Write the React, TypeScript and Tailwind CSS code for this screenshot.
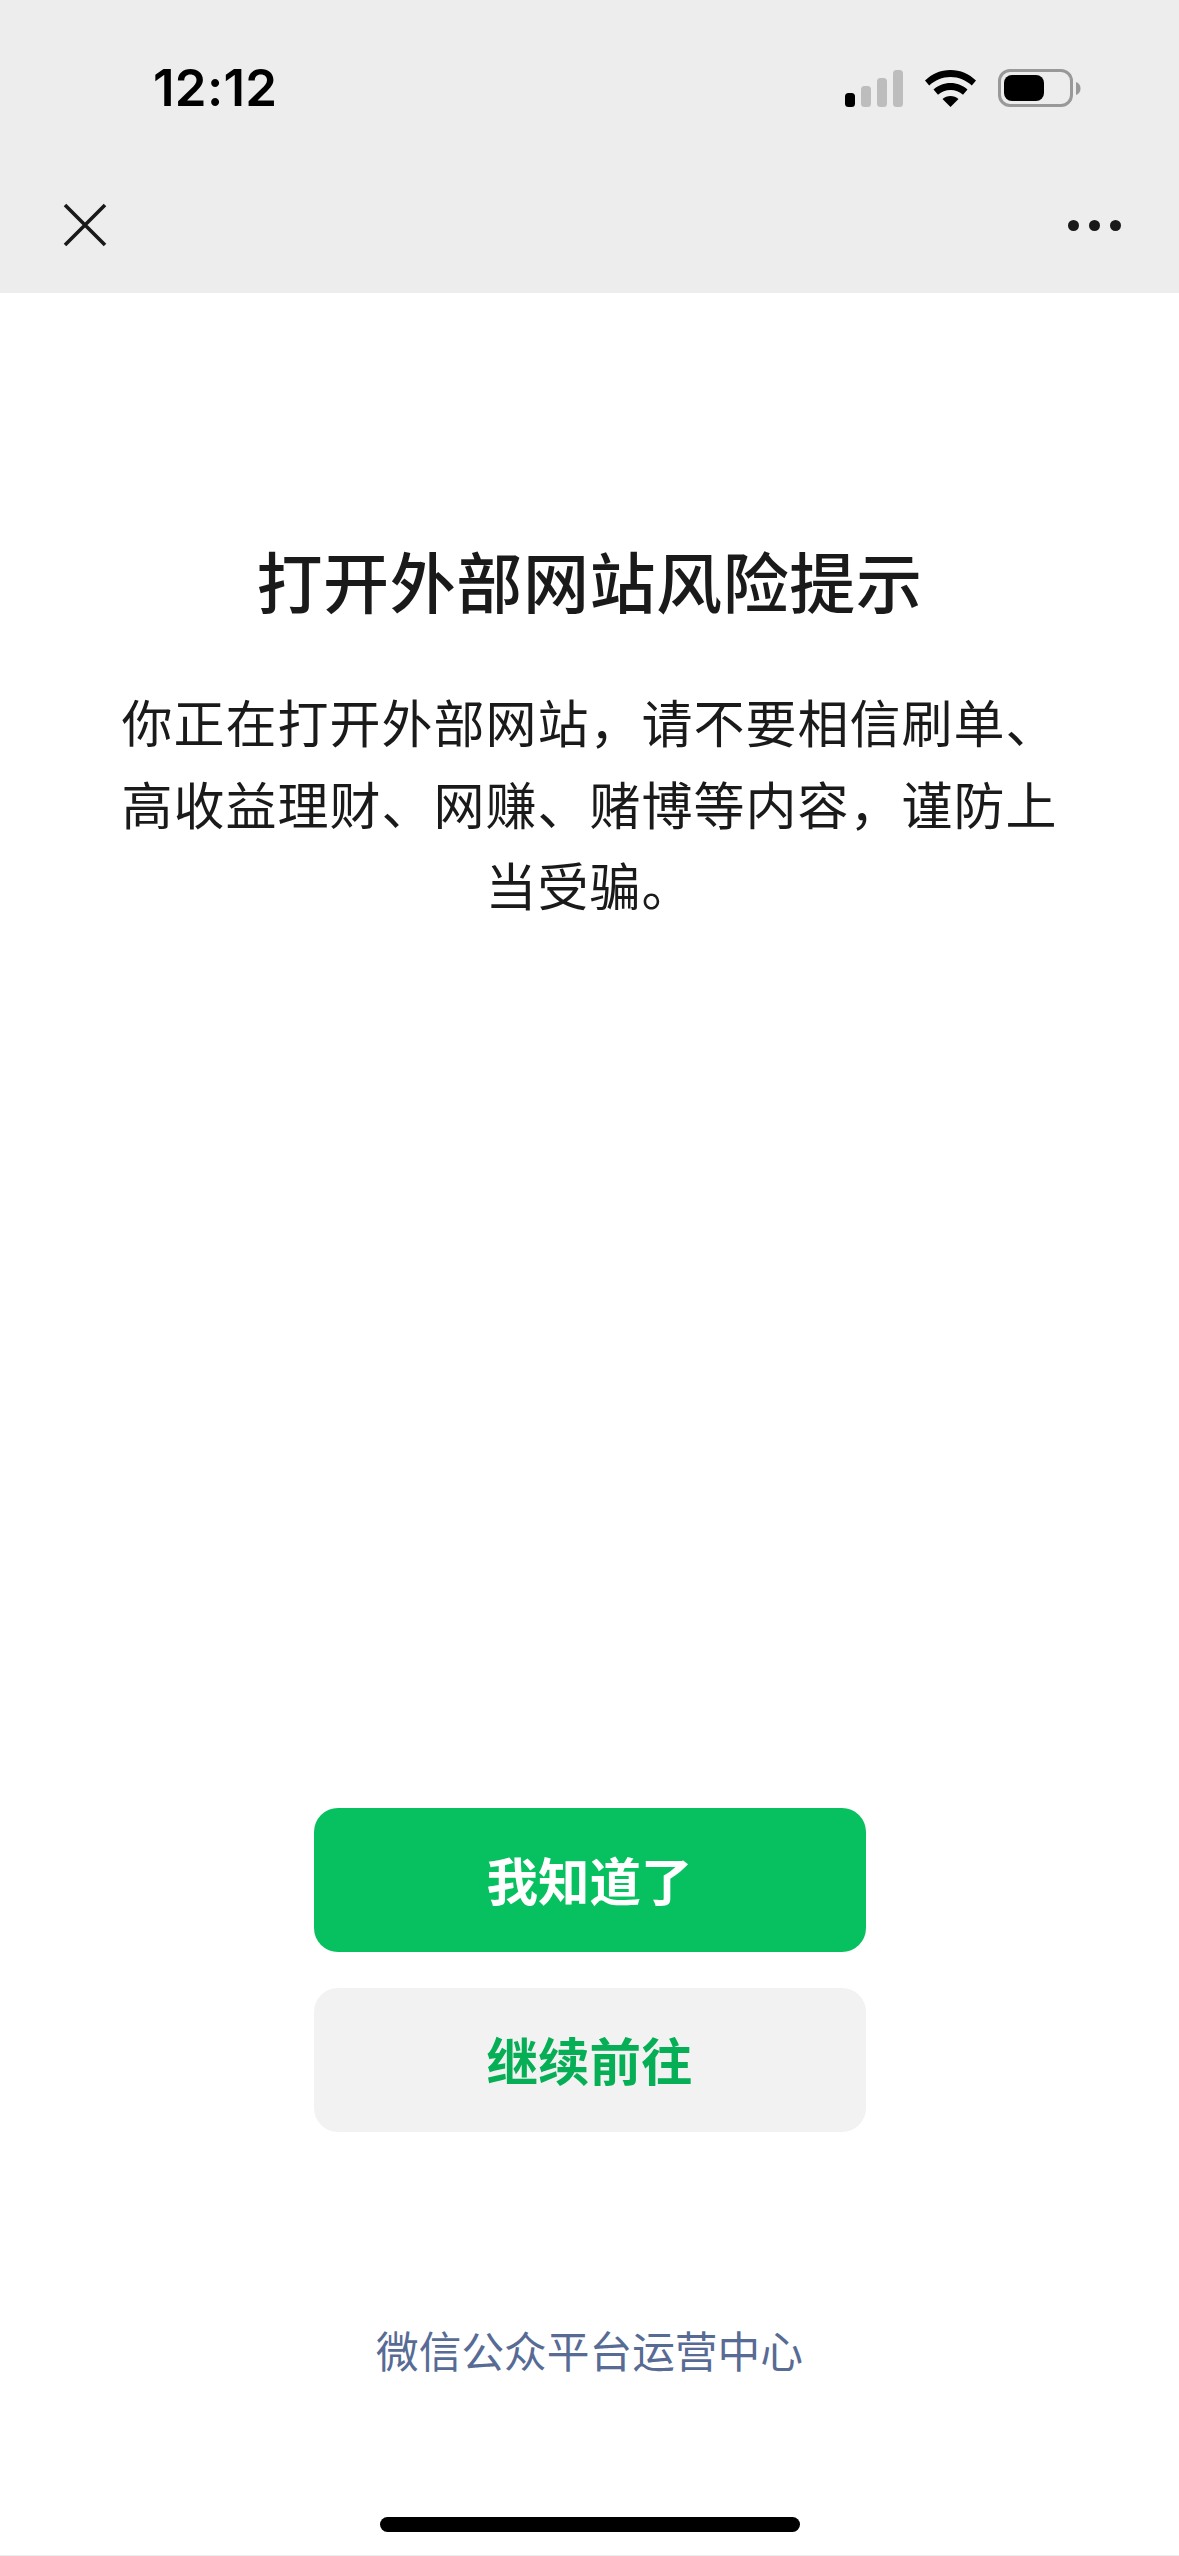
const cjk = "font-['PingFang_SC','Noto_Sans_CJK_SC',sans-serif]";

const SignalIcon = () => (
  <svg width="58" height="37" viewBox="0 0 58 37" className="block">
    <rect x="0" y="23" width="10" height="14" rx="3.5" fill="#000" />
    <rect x="16" y="16" width="10" height="21" rx="3.5" fill="#bdbdbd" />
    <rect x="32" y="8" width="10" height="29" rx="3.5" fill="#bdbdbd" />
    <rect x="48" y="0" width="10" height="37" rx="3.5" fill="#bdbdbd" />
  </svg>
);

const WifiIcon = () => (
  <svg width="51" height="37" viewBox="0 0 51 37" className="block">
    <path d="M0 10.5C7 4 15.5 0 25.5 0S44 4 51 10.5L46.8 15.5C40.8 10.2 33.8 7 25.5 7S10.2 10.2 4.2 15.5Z" fill="#000" />
    <path d="M8.5 19.5C13 15.6 19 13 25.5 13S38 15.6 42.5 19.5L38 24.8C34.5 21.9 30.2 20 25.5 20S16.5 21.9 13 24.8Z" fill="#000" />
    <path d="M17.5 29C19.7 27.2 22.5 26 25.5 26S31.3 27.2 33.5 29L25.5 37Z" fill="#000" />
  </svg>
);

const BatteryIcon = () => (
  <div className="flex items-center">
    <div className="w-[75px] h-[38px] rounded-[12px] border-[3px] border-[#999999] p-[3px] box-border">
      <div className="w-[40px] h-full rounded-[8px] bg-black" />
    </div>
    <svg width="5" height="13" viewBox="0 0 5 13" className="block ml-[3px]">
      <path d="M0 0C3 1 4.5 3.5 4.5 6.5S3 12 0 13Z" fill="#999999" />
    </svg>
  </div>
);

const CloseIcon = () => (
  <svg width="44" height="44" viewBox="0 0 44 44" className="block">
    <path d="M2 2L42 42M42 2L2 42" stroke="#191919" strokeWidth="3.6" fill="none" />
  </svg>
);

const MoreIcon = () => (
  <div className="flex items-center gap-[10px]">
    <div className="w-[11px] h-[11px] rounded-full bg-[#191919]" />
    <div className="w-[11px] h-[11px] rounded-full bg-[#191919]" />
    <div className="w-[11px] h-[11px] rounded-full bg-[#191919]" />
  </div>
);

export default function App() {
  return (
    <div className={`${cjk} w-[1179px] h-[2556px] flex flex-col bg-white overflow-hidden`}>
      <header className="h-[293px] bg-[#ededed] flex flex-col shrink-0">
        <div className="h-[175px] pt-[69px] pl-[153px] pr-[98px] flex items-start justify-between">
          <span className="font-['Inter',sans-serif] font-semibold text-[51px] leading-[37px] tracking-[0.3px] text-black">
            12:12
          </span>
          <div className="flex items-center">
            <SignalIcon />
            <div className="ml-[22px]">
              <WifiIcon />
            </div>
            <div className="ml-[22px]">
              <BatteryIcon />
            </div>
          </div>
        </div>
        <div className="flex items-center justify-between pl-[63px] pr-[58px] mt-[28px]">
          <CloseIcon />
          <MoreIcon />
        </div>
      </header>

      <main className="flex-1 flex flex-col items-center">
        <h1 className="mt-[236px] text-[66px] leading-[100px] font-medium tracking-[0.6px] text-[#1a1a1a]">
          打开外部网站风险提示
        </h1>
        <p className="mt-[52px] w-[960px] text-center text-[51px] leading-[81.5px] tracking-[1px] text-[#1a1a1a]">
          你正在打开外部网站，请不要相信刷单、高收益理财、网赚、赌博等内容，谨防上当受骗。
        </p>

        <div className="mt-auto flex flex-col gap-[36px]">
          <button className="w-[552px] h-[144px] rounded-[24px] pb-[2px] bg-[#07c160] text-white text-[51.5px] font-semibold">
            我知道了
          </button>
          <button className="w-[552px] h-[144px] rounded-[24px] pb-[2px] bg-[#f2f2f2] text-[#06ae56] text-[51.5px] font-semibold">
            继续前往
          </button>
        </div>

        <a className="mt-[187px] text-[42.7px] leading-[60px] text-[#576b95]">微信公众平台运营中心</a>

        <div className="mt-[138px] w-[420px] h-[15px] rounded-full bg-black" />
        <div className="mt-[23px] w-full h-px bg-[#ededed]" />
      </main>
    </div>
  );
}
